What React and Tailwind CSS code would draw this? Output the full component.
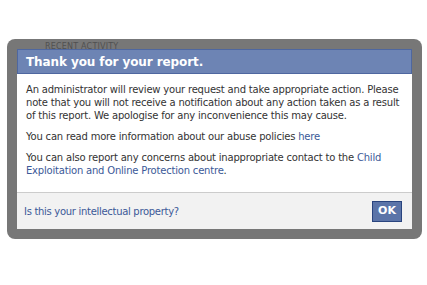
import React from 'react';

const font = { fontFamily: '"DejaVu Sans", "Lucida Grande", sans-serif' };

const App = () => {
  return (
    <div className="w-[427px] h-[285px] bg-white pt-[39px] pl-[7px]" style={font}>
      <div className="relative w-[415px] h-[200px] rounded-[8px] bg-[#777777] p-[10px]">
        <div className="absolute left-[38px] top-[2px] text-[8px] leading-[12px] tracking-[0.2px] text-[#505050]">
          RECENT ACTIVITY
        </div>

        <div className="relative flex flex-col h-full bg-white">
          <div className="h-[25px] bg-[#6d84b4] border border-[#4e67a0] px-[8px] flex items-center">
            <h1 className="text-[12px] font-bold tracking-[-0.1px] text-white leading-none">Thank you for your report.</h1>
          </div>

          <div className="flex-1 px-[9px] pt-[9px] text-[10px] leading-[13px] tracking-[-0.2px] text-[#333]">
            <p>
              An administrator will review your request and take appropriate action. Please note that you will not
              receive a notification about any action taken as a result of this report. We apologise for any
              inconvenience this may cause.
            </p>
            <p className="mt-[8px]">
              You can read more information about our abuse policies <a className="text-[#3b5998]">here</a>
            </p>
            <p className="mt-[8px]">
              You can also report any concerns about inappropriate contact to the{' '}
              <a className="text-[#3b5998]">Child Exploitation and Online Protection centre</a>.
            </p>
          </div>

          <div className="h-[37px] bg-[#f2f2f2] border-t border-[#cccccc] flex items-center justify-between pl-[7px] pr-[10px]">
            <a className="text-[10px] tracking-[-0.3px] text-[#3b5998]">Is this your intellectual property?</a>
            <button className="h-[21px] w-[30px] bg-[#5b74a8] border border-[#29447e] text-white text-[11px] font-bold flex items-center justify-center">
              OK
            </button>
          </div>
        </div>
      </div>
    </div>
  );
};

export default App;
